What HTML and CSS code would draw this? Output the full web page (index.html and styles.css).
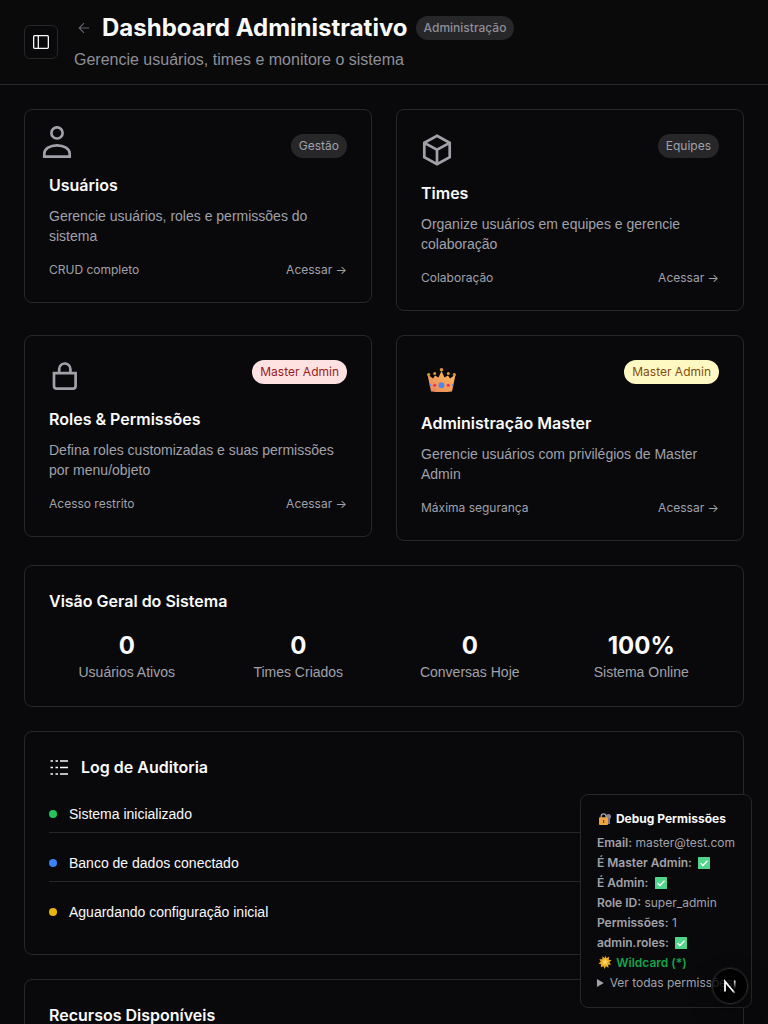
FILE: index.html
```html
<!DOCTYPE html>
<html lang="pt-BR">
<head>
<meta charset="utf-8">
<meta name="viewport" content="width=device-width, initial-scale=1">
<title>Dashboard Administrativo</title>
<link rel="stylesheet" href="styles.css">
</head>
<body>
<div class="app">
  <header class="topbar">
    <button class="sidebar-toggle" type="button" aria-label="Alternar menu">
      <svg width="16" height="16" viewBox="0 0 16 16" fill="none" stroke="currentColor" stroke-width="1.3"><rect x=".65" y="1.65" width="14.7" height="12.7" rx="1"/><path d="M5.3 1.65v12.7"/></svg>
    </button>
    <div class="heading">
      <div class="heading-row">
        <a class="back" href="#" aria-label="Voltar">
          <svg width="20" height="20" viewBox="0 0 20 20" fill="none" stroke="currentColor" stroke-width="1.2"><path d="M15 10H5.5M10 5.2 5.2 10l4.8 4.8"/></svg>
        </a>
        <h1>Dashboard Administrativo</h1>
        <span class="badge badge-strong">Administração</span>
      </div>
      <p class="subtitle">Gerencie usuários, times e monitore o sistema</p>
    </div>
  </header>

  <main class="content">
    <div class="cards">
      <a class="card" href="#">
        <div class="card-head">
          <svg class="icon icon-outset" viewBox="0 0 32 32"><circle cx="16" cy="6.9" r="5.6"/><path d="M3.3 30.7V27.6C3.3 22.8 9 19.4 16 19.4s12.7 3.4 12.7 8.2v3.1z"/></svg>
          <span class="badge">Gestão</span>
        </div>
        <h2>Usuários</h2>
        <p class="desc">Gerencie usuários, roles e permissões do sistema</p>
        <div class="card-foot"><span>CRUD completo</span><span>Acessar →</span></div>
      </a>
      <a class="card" href="#">
        <div class="card-head">
          <svg class="icon" viewBox="0 0 32 32"><path d="M16 1.8 28.7 8.9v14.2L16 30.2 3.3 23.1V8.9zM3.8 9.1 16 15.6l12.2-6.5M16 15.6v14.4"/></svg>
          <span class="badge">Equipes</span>
        </div>
        <h2>Times</h2>
        <p class="desc">Organize usuários em equipes e gerencie colaboração</p>
        <div class="card-foot"><span>Colaboração</span><span>Acessar →</span></div>
      </a>
      <a class="card" href="#">
        <div class="card-head">
          <svg class="icon" viewBox="0 0 32 32"><path d="M5 13.2h21.6v12.8a2.7 2.7 0 0 1-2.7 2.7H7.7A2.7 2.7 0 0 1 5 26zM10.2 13.2V9.1a5.6 5.6 0 0 1 11.2 0v4.1"/></svg>
          <span class="badge badge-red">Master Admin</span>
        </div>
        <h2>Roles &amp; Permissões</h2>
        <p class="desc">Defina roles customizadas e suas permissões por menu/objeto</p>
        <div class="card-foot"><span>Acesso restrito</span><span>Acessar →</span></div>
      </a>
      <a class="card" href="#">
        <div class="card-head">
          <svg class="crown" width="41" height="36" viewBox="0 0 41 36">
            <defs><linearGradient id="gold" x1="0" y1="1" x2="1" y2="0"><stop offset="0" stop-color="#e8835c"/><stop offset="1" stop-color="#ffc05c"/></linearGradient></defs>
            <path d="M6.500 14.500 12 18.500l2-3 3.500 2L20.500 11l3 6.500 3.500-2 2 3 5.500-4L31 31.500q-10.500 1-21 0z" fill="url(#gold)"/>
            <g fill="#d89a30"><circle cx="7.700" cy="14.500" r="1.600"/><circle cx="13.700" cy="13.500" r="1.500"/><circle cx="20.500" cy="9.800" r="1.800"/><circle cx="27.300" cy="13.500" r="1.500"/><circle cx="33.300" cy="14.500" r="1.600"/></g>
            <circle cx="20.500" cy="25.200" r="2.900" fill="#4c88ee"/><circle cx="13.700" cy="25.300" r="1.500" fill="#ee2e5d"/><circle cx="27.300" cy="25.300" r="1.500" fill="#ee2e5d"/><circle cx="9.300" cy="25" r=".9" fill="#4c88ee"/><circle cx="31.700" cy="25" r=".9" fill="#4c88ee"/>
          </svg>
          <span class="badge badge-yellow">Master Admin</span>
        </div>
        <h2>Administração Master</h2>
        <p class="desc">Gerencie usuários com privilégios de Master Admin</p>
        <div class="card-foot"><span>Máxima segurança</span><span>Acessar →</span></div>
      </a>
    </div>

    <section class="card">
      <h2>Visão Geral do Sistema</h2>
      <div class="stats">
        <div><strong>0</strong><span>Usuários Ativos</span></div>
        <div><strong>0</strong><span>Times Criados</span></div>
        <div><strong>0</strong><span>Conversas Hoje</span></div>
        <div><strong>100%</strong><span>Sistema Online</span></div>
      </div>
    </section>

    <section class="card">
      <h2 class="with-icon">
        <svg width="20" height="20" viewBox="0 0 20 20" stroke="currentColor" stroke-width="1.600"><path d="M1.500 4h2.500M6.500 4h2.500M11 4h8M1.500 10.500h2.500M6.500 10.500h2.500M11 10.500h8M1.500 17h2.500M6.500 17h2.500M11 17h8"/></svg>
        Log de Auditoria
      </h2>
      <ul class="log">
        <li><i class="dot green"></i>Sistema inicializado</li>
        <li><i class="dot blue"></i>Banco de dados conectado</li>
        <li><i class="dot amber"></i>Aguardando configuração inicial</li>
      </ul>
    </section>

    <section class="card">
      <h2>Recursos Disponíveis</h2>
    </section>
  </main>
</div>

<svg class="sprite" aria-hidden="true">
  <symbol id="check" viewBox="0 0 12 12"><rect width="12" height="12" rx=".6" fill="#50d58b"/><path d="m2.600 6.200 2.300 2.300 4.600-4.800" fill="none" stroke="#fff" stroke-width="1.300"/></symbol>
</svg>

<aside class="debug">
  <h3>
    <svg width="16" height="14" viewBox="0 0 16 14"><circle cx="11.500" cy="4.500" r="2.500" fill="#8b8196"/><path d="M11 6h2v6h-2z" fill="#7b7186"/><path d="M4.200 6V4.300a2.400 2.400 0 0 1 4.800 0V6" fill="none" stroke="#a9a2b4" stroke-width="1.300"/><rect x="2" y="5.300" width="9" height="7.700" rx="1" fill="#f0a440"/><path d="M6 8h1.200v3H6z" fill="#70451f"/></svg>
    Debug Permissões
  </h3>
  <p><b>Email:</b> master@test.com</p>
  <p><b>É Master Admin:</b> <svg class="check" role="img" aria-label="Sim"><use href="#check"/></svg></p>
  <p><b>É Admin:</b> <svg class="check" role="img" aria-label="Sim"><use href="#check"/></svg></p>
  <p><b>Role ID:</b> super_admin</p>
  <p><b>Permissões:</b> 1</p>
  <p><b>admin.roles:</b> <svg class="check" role="img" aria-label="Sim"><use href="#check"/></svg></p>
  <p class="wildcard"><svg width="16" height="14" viewBox="0 0 16 14"><path d="m8 .5 1.500 2.600 2.800-1.300-.6 2.900 2.800.6-2.200 2 1.800 2.300-2.900.2.300 3-2.600-1.500L7.500 14l-1-2.700-2.800 1 .5-2.900-2.700-.8 2.300-1.900-1.500-2.500 3 .1.200-3 2.200 2z" fill="#e8ae25"/><path d="m8 3.600 1 2.100 2.300.3-1.700 1.600.4 2.300L8 8.800 5.900 9.900l.5-2.300L4.700 6 7 5.700z" fill="#ffd657"/></svg> <b>Wildcard (*)</b></p>
  <details>
    <summary>Ver todas permissões</summary>
  </details>
</aside>

<button class="dev-badge" type="button" aria-label="Ferramentas de desenvolvimento">
  <svg width="20" height="20" viewBox="0 0 20 20" fill="none">
    <defs>
      <linearGradient id="fade-a" x1="9" y1="9" x2="16" y2="18" gradientUnits="userSpaceOnUse"><stop stop-color="#fff"/><stop offset=".6" stop-color="#fff"/><stop offset="1" stop-color="#fff" stop-opacity="0"/></linearGradient>
      <linearGradient id="fade-b" x1="14" y1="4" x2="14" y2="13" gradientUnits="userSpaceOnUse"><stop stop-color="#fff"/><stop offset="1" stop-color="#fff" stop-opacity="0"/></linearGradient>
    </defs>
    <path d="M5 15.500V5.500l9.700 11.500" stroke="url(#fade-a)" stroke-width="1.800"/>
    <path d="M14.700 4.500V13" stroke="url(#fade-b)" stroke-width="1.700"/>
  </svg>
</button>
</body>
</html>
```
FILE: styles.css
```css
* { box-sizing: border-box; }

body {
  margin: 0;
  background: #09090b;
  color: #fafafa;
  font-family: Inter, "Liberation Sans", sans-serif;
  font-size: 14px;
  line-height: 20px;
}

h1, h2, h3, p, ul { margin: 0; padding: 0; }
svg { flex-shrink: 0; }
a { color: inherit; text-decoration: none; }
.sprite { display: none; }

.subtitle, .desc, .log, .stats span { font-family: "Liberation Sans", Arial, sans-serif; }

.app {
  display: flex;
  flex-direction: column;
  height: 100vh;
}

.topbar {
  display: flex;
  align-items: center;
  gap: 16px;
  padding: 12px 24px;
  background: #0a0a0a;
  border-bottom: 1px solid #27272a;
}

.sidebar-toggle {
  display: grid;
  place-items: center;
  width: 34px;
  height: 34px;
  padding: 0;
  color: #fafafa;
  background: #09090b;
  border: 1px solid #27272a;
  border-radius: 6px;
}

.heading { display: grid; gap: 4px; }
.heading-row { display: flex; align-items: center; gap: 8px; }
.back { display: flex; color: #63636b; }
h1 { font-size: 24px; line-height: 32px; font-weight: 700; }
.subtitle { color: #8f8f98; font-size: 16px; line-height: 24px; }

.badge {
  padding: 4px 8px;
  border-radius: 12px;
  background: #27272a;
  color: #a1a1aa;
  font-size: 12px;
  line-height: 16px;
}
.badge-strong { font-weight: 500; color: #8f8f98; }
.badge-red { background: #fee2e2; color: #991b1b; }
.badge-yellow { background: #fef9c3; color: #854d0e; }

.content {
  display: flex;
  flex: 1;
  flex-direction: column;
  gap: 24px;
  min-height: 0;
  padding: 24px;
  overflow-y: auto;
  scrollbar-width: none;
}

.cards {
  display: grid;
  grid-template-columns: repeat(2, 1fr);
  align-items: start;
  gap: 24px;
}

.card {
  display: block;
  flex-shrink: 0;
  padding: 24px;
  border: 1px solid #27272a;
  border-radius: 8px;
}

.card-head {
  display: flex;
  align-items: flex-start;
  justify-content: space-between;
  margin-bottom: 16px;
}

.icon {
  width: 32px;
  height: 32px;
  fill: none;
  stroke: #a1a1aa;
  stroke-width: 2.7;
}
.icon-outset { margin: -8px 0 0 -8px; }

h2 { font-size: 16px; line-height: 22px; font-weight: 600; }
.desc { margin: 10px 0 16px; color: #a1a1aa; }

.card-foot {
  display: flex;
  justify-content: space-between;
  color: #a1a1aa;
  font-size: 12px;
  line-height: 16px;
}

.stats {
  display: grid;
  grid-template-columns: repeat(4, 1fr);
  gap: 16px;
  margin-top: 18px;
  text-align: center;
}
.stats strong { display: block; font-size: 24px; line-height: 32px; }
.stats span { display: block; color: #a1a1aa; }

.with-icon { display: flex; align-items: center; gap: 12px; }

.log { display: grid; gap: 12px; margin-top: 18px; list-style: none; }
.log li { display: flex; align-items: center; gap: 12px; padding: 8px 0; }
.log li:not(:last-child) { border-bottom: 1px solid #27272a; }
.dot { width: 8px; height: 8px; border-radius: 50%; }
.green { background: #22c55e; }
.blue { background: #3b82f6; }
.amber { background: #eab308; }

.debug {
  position: fixed;
  right: 16px;
  bottom: 16px;
  display: grid;
  gap: 4px;
  padding: 16px;
  background: #09090b;
  border: 1px solid #27272a;
  border-radius: 8px;
  color: #a1a1aa;
  font-size: 12px;
  line-height: 16px;
  white-space: nowrap;
}
.debug h3 {
  display: flex;
  align-items: center;
  gap: 3px;
  margin-bottom: 4px;
  color: #fafafa;
  font-size: 12px;
  font-weight: 700;
}
.debug b { font-weight: 600; }
.debug svg { vertical-align: -2px; }
.check { width: 12px; height: 12px; margin-left: 3px; }
.wildcard { color: #16a34a; }

.dev-badge {
  position: fixed;
  right: 20px;
  bottom: 20px;
  display: grid;
  place-items: center;
  width: 36px;
  height: 36px;
  padding: 0;
  background: rgba(0, 0, 0, .8);
  border: 1px solid #2b2b2b;
  border-radius: 50%;
  box-shadow: 0 0 0 1px #171717, 0 8px 24px rgba(0, 0, 0, .3);
}
```
